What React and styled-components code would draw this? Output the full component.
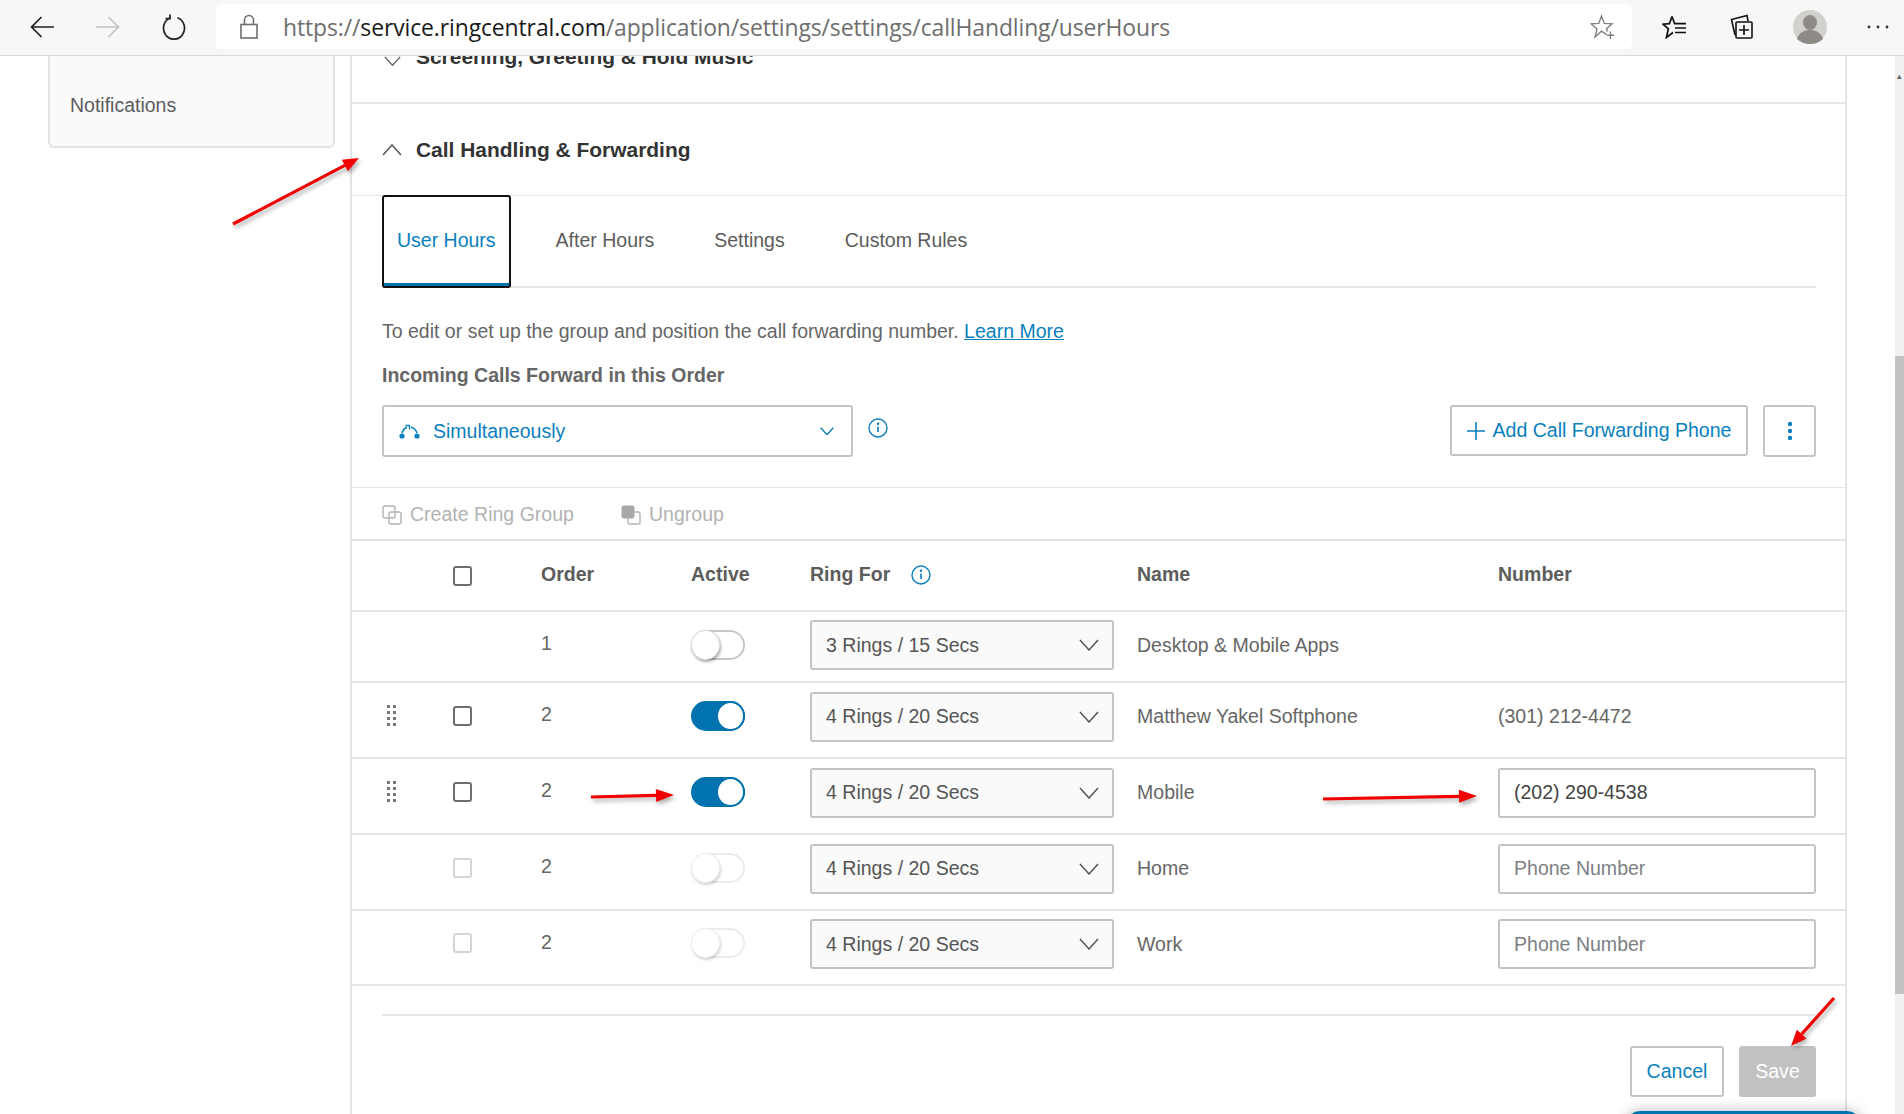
import React from "react";
import styled, { createGlobalStyle } from "styled-components";

const GlobalStyle = createGlobalStyle`
  html, body { margin: 0; padding: 0; background: #fff; }
  body { font-family: "Liberation Sans", Arial, sans-serif; color: #666; overflow: hidden; }
  * { box-sizing: border-box; }
`;

const BLUE = "#0a7fbd";
const LINE = "#e4e4e4";
const BORDER = "#c4c4c4";

const Page = styled.div`
  position: relative;
  width: 1904px;
  height: 1114px;
  overflow: hidden;
  display: flex;
  flex-direction: column;
`;

const BrowserBar = styled.header`
  position: relative;
  z-index: 2;
  height: 56px;
  flex: none;
  display: flex;
  align-items: flex-start;
  padding: 4px 0 0 30px;
  background: #f7f7f7;
  border-bottom: 1px solid #d8d8d8;
  overflow: hidden;
`;

const NavGroup = styled.div`
  display: flex;
  flex: none;
  gap: 42px;
  height: 45px;
  align-items: center;
`;

const UrlBox = styled.div`
  width: 1416px;
  height: 45px;
  flex: none;
  margin-left: 30px;
  display: flex;
  align-items: center;
  padding: 0 17px 0 24px;
  background: #fff;
  border-radius: 6px;
`;

const UrlText = styled.div`
  margin: 2px 0 0 25px;
  flex: 1;
  font-family: "Open Sans", sans-serif;
  font-size: 22.92px;
  letter-spacing: -0.1px;
  color: #6e6e6e;
  white-space: nowrap;
`;

const UrlHost = styled.span`
  color: #1a1a1a;
`;

const ToolGroup = styled.div`
  display: flex;
  flex: none;
  margin-left: 8px;
  height: 45px;
`;

const ToolSlot = styled.div`
  width: 68px;
  flex: none;
  display: flex;
  align-items: center;
  justify-content: center;
`;

const Content = styled.div`
  flex: 1;
  display: flex;
  min-height: 0;
`;

const Sidebar = styled.aside`
  width: 350px;
  flex: none;
  padding-left: 48px;
`;

const SideCard = styled.div`
  width: 287px;
  height: 92px;
  padding-top: 37px;
  padding-left: 20px;
  background: #fafafa;
  border: 2px solid ${LINE};
  border-top: 0;
  border-radius: 0 0 6px 6px;
  font-size: 19.5px;
  line-height: 24px;
  color: #5c5c5c;
`;

const Panel = styled.main`
  width: 1497px;
  flex: none;
  border-left: 2px solid ${LINE};
  border-right: 2px solid ${LINE};
`;

const SectionHead = styled.div`
  display: flex;
  align-items: ${(p) => (p.$clipped ? "flex-start" : "center")};
  height: ${(p) => p.$height}px;
  padding-left: 30px;
  overflow: hidden;
  border-bottom: ${(p) => (p.$thick ? 2 : 1)}px solid ${LINE};
`;

const ChevronSlot = styled.span`
  display: flex;
  justify-content: center;
  width: 20px;
  flex: none;
`;

const SectionTitle = styled.h3`
  margin: ${(p) => (p.$clipped ? "-11px" : "0")} 0 0 14px;
  font-size: 20.95px;
  line-height: 24px;
  font-weight: bold;
  color: #333;
`;

const Body = styled.div`
  padding: 0 29px 0 30px;
`;

const Tabs = styled.nav`
  display: flex;
  gap: 30px;
  height: 93px;
  margin-top: -1px;
  border-bottom: 2px solid ${LINE};
`;

const Tab = styled.div`
  position: relative;
  height: 93px;
  padding: 0 15px 3px;
  display: flex;
  align-items: center;
  font-size: 19.5px;
  color: ${(p) => (p.$active ? BLUE : "#5c5c5c")};
  ${(p) => p.$active && `
    margin-bottom: -2px;
    border: 2px solid #111;
    border-radius: 3px;
    padding: 0 13px 3px;
    box-shadow: inset 0 -3px 0 #0073ae;
    background: #fff;
  `}
`;

const Intro = styled.p`
  margin: 31px 0 0;
  font-size: 19.5px;
  line-height: 24px;
  color: #666;
`;

const LearnMore = styled.a`
  color: ${BLUE};
  text-decoration: underline;
`;

const FieldLabel = styled.div`
  margin-top: 20px;
  font-size: 19.5px;
  line-height: 24px;
  font-weight: bold;
  color: #666;
`;

const OrderRow = styled.div`
  display: flex;
  align-items: flex-start;
  margin-top: 18px;
  height: 82px;
`;

const OrderSelect = styled.div`
  width: 471px;
  height: 52px;
  display: flex;
  align-items: center;
  padding: 0 17px 0 15px;
  border: 2px solid ${BORDER};
  border-radius: 3px;
  font-size: 19.5px;
  color: ${BLUE};
`;

const OrderValue = styled.span`
  flex: 1;
  margin-left: 13px;
`;

const InfoSlot = styled.span`
  display: inline-flex;
  margin: ${(p) => p.$margin};
`;

const Spacer = styled.div`
  flex: 1;
`;

const OutlineButton = styled.button`
  height: ${(p) => p.$height || 51}px;
  width: ${(p) => p.$width}px;
  margin-left: ${(p) => p.$gap || 0}px;
  display: flex;
  align-items: center;
  justify-content: center;
  gap: 8px;
  padding: 0;
  background: #fff;
  border: 2px solid ${BORDER};
  border-radius: 3px;
  font-family: inherit;
  font-size: 19.55px;
  color: ${BLUE};
`;

const Toolbar = styled.div`
  display: flex;
  align-items: center;
  height: 52px;
  padding: 2px 0 0 30px;
  border-top: 1px solid ${LINE};
  font-size: 19.55px;
  color: #b2b2b2;
`;

const ToolbarItem = styled.span`
  display: flex;
  align-items: center;
  gap: 8px;
  margin-right: 47px;
`;

const Row = styled.div`
  display: grid;
  grid-template-columns: 71px 88px 150px 119px 327px 361px 318px;
  align-items: center;
  height: ${(p) => p.$height}px;
  padding: 0 0 ${(p) => p.$lift}px 30px;
  border-top: 2px solid ${LINE};
  font-size: 19.55px;
  color: #666;
`;

const HeadCell = styled.div`
  display: flex;
  align-items: center;
  margin-top: -2px;
  font-weight: bold;
  color: #5c5c5c;
`;

const OrderCell = styled.div`
  margin-top: -4px;
`;

const Check = styled.span`
  display: block;
  width: 19px;
  height: 20px;
  margin-top: ${(p) => (p.$nudge ? -2 : 0)}px;
  border: 2px solid ${(p) => (p.$muted ? "#d4d4d4" : "#6e6e6e")};
  border-radius: 3px;
`;

const Grip = styled.div`
  display: grid;
  grid-template-columns: 3px 3px;
  gap: 3px 3px;
  width: 9px;
  margin: -2px 0 0 5px;
`;

const GripDot = styled.i`
  display: block;
  width: 3px;
  height: 3px;
  background: #777;
`;

const Toggle = styled.span`
  position: relative;
  display: block;
  width: 54px;
  height: 30px;
  margin-top: ${(p) => (p.$nudge ? -2 : 0)}px;
  border-radius: 15px;
  border: 2px solid ${(p) => (p.$on ? "#0073ae" : p.$muted ? "#ececec" : "#c8c8c8")};
  background: ${(p) => (p.$on ? "#0073ae" : "#fff")};
`;

const Knob = styled.span`
  position: absolute;
  top: -2px;
  ${(p) => (p.$on ? "right: -2px;" : "left: -2px;")}
  width: 29px;
  height: 30px;
  border-radius: 50%;
  background: #fff;
  ${(p) => (p.$on
    ? "border: 2px solid #0073ae;"
    : `box-shadow: 1px 2px 3px rgba(0,0,0,${p.$muted ? 0.18 : 0.35}); border: 1px solid ${p.$muted ? "#eee" : "#ddd"};`)}
`;

const RingSelect = styled.div`
  width: 304px;
  height: 50px;
  display: flex;
  align-items: center;
  justify-content: space-between;
  padding: 0 13px 0 14px;
  background: #fafafa;
  border: 2px solid ${BORDER};
  border-radius: 3px;
  color: #555;
`;

const PhoneInput = styled.input`
  width: 318px;
  height: 50px;
  padding: 0 14px;
  border: 2px solid ${BORDER};
  border-radius: 3px;
  font-family: inherit;
  font-size: 19.55px;
  color: #444;
  outline: none;
  &::placeholder { color: #7c8084; opacity: 1; }
`;

const TableEnd = styled.div`
  border-top: 2px solid ${LINE};
  padding: 28px 29px 0 30px;
`;

const Footer = styled.div`
  display: flex;
  justify-content: flex-end;
  gap: 15px;
  padding-top: 30px;
  border-top: 2px solid ${LINE};
`;

const SaveButton = styled.button`
  width: 77px;
  height: 51px;
  padding: 0;
  background: #c2c2c2;
  border: 0;
  border-radius: 3px;
  font-family: inherit;
  font-size: 19.55px;
  color: #fff;
`;

const ScrollTrack = styled.div`
  width: 9px;
  margin-left: auto;
  flex: none;
  display: flex;
  flex-direction: column;
  background: #f1f1f1;
`;

const ScrollArrow = styled.div`
  height: 16px;
  margin-top: 12px;
  font-size: 9px;
  line-height: 16px;
  text-align: center;
  color: #666;
`;

const ScrollThumb = styled.div`
  height: 638px;
  margin-top: 272px;
  background: #c2c2c2;
`;

const HelpPill = styled.div`
  position: absolute;
  left: 1626px;
  top: 1111px;
  width: 235px;
  height: 30px;
  border-radius: 14px 14px 0 0;
  background: #0073ae;
  box-shadow: 0 0 14px rgba(0, 0, 0, 0.28);
`;

const Annotations = styled.svg`
  position: absolute;
  inset: 0;
  z-index: 3;
  pointer-events: none;
  filter: drop-shadow(2px 3px 2px rgba(0, 0, 0, 0.3));
`;

const Chevron = ({ up, size = 22, color = "#555", width = 1.5 }) => (
  <svg width={size} height={size * 0.6} viewBox="0 0 20 12" fill="none" stroke={color} strokeWidth={width}>
    <path d={up ? "M1 11 10 1l9 10" : "M1 1l9 10 9-10"} />
  </svg>
);

const InfoIcon = () => (
  <svg width="20" height="20" viewBox="0 0 20 20" fill="none" stroke={BLUE} strokeWidth="1.4">
    <circle cx="10" cy="10" r="9" />
    <path d="M10 8.6v5.4" strokeWidth="1.6" />
    <circle cx="10" cy="5.8" r="0.6" fill={BLUE} />
  </svg>
);

const BackIcon = () => (
  <svg width="24" height="22" viewBox="0 0 24 22" fill="none" stroke="#222" strokeWidth="1.7">
    <path d="M24 11H2M11.5 1 1.5 11l10 10" />
  </svg>
);

const ForwardIcon = () => (
  <svg width="24" height="22" viewBox="0 0 24 22" fill="none" stroke="#c4c4c4" strokeWidth="1.7">
    <path d="M0 11h22M12.5 1l10 10-10 10" />
  </svg>
);

const RefreshIcon = () => (
  <svg width="24" height="26" viewBox="0 0 24 26" fill="none" stroke="#222" strokeWidth="1.7">
    <path d="M15.5 3.8a10.5 11 0 1 1-7 0" />
    <path d="M8 0.5v4.2H3.5" />
  </svg>
);

const LockIcon = () => (
  <svg width="18" height="25" viewBox="0 0 18 25" fill="none" stroke="#6e6e6e" strokeWidth="1.6">
    <rect x="1" y="10.5" width="16" height="13.5" />
    <path d="M4.5 10.5V6a4.5 4.5 0 0 1 9 0v4.5" />
  </svg>
);

const StarAddIcon = () => (
  <svg width="25" height="26" viewBox="0 0 25 26" fill="none" stroke="#808080" strokeWidth="1.4">
    <path d="M16.5 20.6 11.5 17.2 5 23l2-8-6-5.2 7.8-.4L11.5 2l2.8 7.4 7.8.4-5.6 5 .9 2.6" />
    <path d="M20.5 17.5v7.5M17 21.2h7.2" />
  </svg>
);

const FavoritesIcon = () => (
  <svg width="24" height="24" viewBox="0 0 24 24" fill="none" stroke="#111" strokeWidth="1.7">
    <path d="M10 1.5 7.4 8.6 1 9.2l5.4 4.6L4.4 22.5l6.6-5" />
    <path d="M10 1.5l2.6 7.1H24M13 13h11M13 17.5h11" />
  </svg>
);

const CollectionsIcon = () => (
  <svg width="24" height="26" viewBox="0 0 24 26" fill="none" stroke="#111" strokeWidth="1.6">
    <path d="M5 21 1.5 5.5 17 1.5 18 7" />
    <rect x="6" y="8" width="16" height="16" rx="1" fill="#f7f7f7" />
    <path d="M14 11v10M9 16h10" />
  </svg>
);

const AvatarIcon = () => (
  <svg width="34" height="34" viewBox="0 0 34 34">
    <ellipse cx="17" cy="17" rx="17" ry="17" fill="#d2d1ce" />
    <ellipse cx="17" cy="12.5" rx="7" ry="7.5" fill="#8e8a86" />
    <path d="M4 29c2-7 8-9 13-9s11 2 13 9c-3 3-8 5-13 5S7 32 4 29z" fill="#8e8a86" />
  </svg>
);

const MoreIcon = () => (
  <svg width="22" height="4" viewBox="0 0 22 4" fill="#333">
    <circle cx="2" cy="2" r="1.4" /><circle cx="11" cy="2" r="1.4" /><circle cx="20" cy="2" r="1.4" />
  </svg>
);

const RouteIcon = () => (
  <svg width="21" height="15" viewBox="0 0 21 15" fill="none" stroke={BLUE} strokeWidth="1.5">
    <path d="M3 9c1-3 3-5 5-6M18 9c-1-3-3-5-6-6" />
    <path d="M6.5 1.5 10.5 1.5 10.5 5.5" strokeWidth="1.3" />
    <circle cx="3" cy="12" r="2.6" fill={BLUE} stroke="none" />
    <circle cx="18" cy="12" r="2.6" fill={BLUE} stroke="none" />
  </svg>
);

const PlusIcon = () => (
  <svg width="18" height="18" viewBox="0 0 18 18" stroke={BLUE} strokeWidth="1.6">
    <path d="M9 0v18M0 9h18" />
  </svg>
);

const KebabIcon = () => (
  <svg width="6" height="20" viewBox="0 0 6 20" fill={BLUE}>
    <circle cx="3" cy="3" r="2.2" /><circle cx="3" cy="10" r="2.2" /><circle cx="3" cy="17" r="2.2" />
  </svg>
);

const GroupIcon = () => (
  <svg width="20" height="20" viewBox="0 0 20 20" fill="none" stroke="#b2b2b2" strokeWidth="1.4">
    <rect x="1" y="1" width="12" height="12" rx="2" />
    <rect x="7" y="7" width="12" height="12" rx="2" />
  </svg>
);

const UngroupIcon = () => (
  <svg width="20" height="20" viewBox="0 0 20 20" fill="none" stroke="#b2b2b2" strokeWidth="1.4">
    <rect x="7" y="7" width="12" height="12" rx="2" />
    <rect x="0.5" y="0.5" width="13" height="13" rx="2.5" fill="#a8a8a8" stroke="none" />
  </svg>
);

const Arrow = ({ from, to, head = 16, width = 3.2 }) => {
  const [x1, y1] = from;
  const [x2, y2] = to;
  const a = Math.atan2(y2 - y1, x2 - x1);
  const bx = x2 - head * Math.cos(a);
  const by = y2 - head * Math.sin(a);
  const nx = -Math.sin(a) * 6.5;
  const ny = Math.cos(a) * 6.5;
  return (
    <g>
      <path d={`M${x1} ${y1}L${bx} ${by}`} stroke="#f00000" strokeWidth={width} />
      <path d={`M${x2} ${y2}L${bx + nx} ${by + ny}L${bx - nx} ${by - ny}Z`} fill="#f00000" />
    </g>
  );
};

const rows = [
  { order: 1, ring: "3 Rings / 15 Secs", name: "Desktop & Mobile Apps", height: 71, lift: 3, fixed: true },
  { order: 2, ring: "4 Rings / 20 Secs", name: "Matthew Yakel Softphone", number: "(301) 212-4472", on: true, grip: true, height: 76, lift: 7 },
  { order: 2, ring: "4 Rings / 20 Secs", name: "Mobile", value: "(202) 290-4538", on: true, grip: true, height: 76, lift: 7 },
  { order: 2, ring: "4 Rings / 20 Secs", name: "Home", muted: true, height: 76, lift: 7 },
  { order: 2, ring: "4 Rings / 20 Secs", name: "Work", muted: true, height: 75, lift: 7 },
];

const App = () => (
  <Page>
    <GlobalStyle />
    <BrowserBar>
      <NavGroup>
        <BackIcon />
        <ForwardIcon />
        <RefreshIcon />
      </NavGroup>
      <UrlBox>
        <LockIcon />
        <UrlText>
          https://<UrlHost>service.ringcentral.com</UrlHost>/application/settings/settings/callHandling/userHours
        </UrlText>
        <StarAddIcon />
      </UrlBox>
      <ToolGroup>
        <ToolSlot><FavoritesIcon /></ToolSlot>
        <ToolSlot><CollectionsIcon /></ToolSlot>
        <ToolSlot><AvatarIcon /></ToolSlot>
        <ToolSlot><MoreIcon /></ToolSlot>
      </ToolGroup>
    </BrowserBar>

    <Content>
      <Sidebar>
        <SideCard>Notifications</SideCard>
      </Sidebar>

      <Panel>
        <SectionHead $clipped $thick $height={48}>
          <ChevronSlot><Chevron size={17} /></ChevronSlot>
          <SectionTitle $clipped>Screening, Greeting &amp; Hold Music</SectionTitle>
        </SectionHead>
        <SectionHead $height={92}>
          <ChevronSlot><Chevron up size={20} /></ChevronSlot>
          <SectionTitle>Call Handling &amp; Forwarding</SectionTitle>
        </SectionHead>

        <Body>
          <Tabs>
            <Tab $active>User Hours</Tab>
            <Tab>After Hours</Tab>
            <Tab>Settings</Tab>
            <Tab>Custom Rules</Tab>
          </Tabs>
          <Intro>
            To edit or set up the group and position the call forwarding number. <LearnMore>Learn More</LearnMore>
          </Intro>
          <FieldLabel>Incoming Calls Forward in this Order</FieldLabel>
          <OrderRow>
            <OrderSelect>
              <RouteIcon />
              <OrderValue>Simultaneously</OrderValue>
              <Chevron size={14} color={BLUE} width={2} />
            </OrderSelect>
            <InfoSlot $margin="13px 0 0 15px"><InfoIcon /></InfoSlot>
            <Spacer />
            <OutlineButton $width={298}><PlusIcon />Add Call Forwarding Phone</OutlineButton>
            <OutlineButton $width={53} $height={52} $gap={15}><KebabIcon /></OutlineButton>
          </OrderRow>
        </Body>

        <Toolbar>
          <ToolbarItem><GroupIcon />Create Ring Group</ToolbarItem>
          <ToolbarItem><UngroupIcon />Ungroup</ToolbarItem>
        </Toolbar>

        <Row $height={71} $lift={0}>
          <span />
          <Check />
          <HeadCell>Order</HeadCell>
          <HeadCell>Active</HeadCell>
          <HeadCell>Ring For<InfoSlot $margin="0 0 0 21px"><InfoIcon /></InfoSlot></HeadCell>
          <HeadCell>Name</HeadCell>
          <HeadCell>Number</HeadCell>
        </Row>

        {rows.map((row, i) => (
          <Row key={i} $height={row.height} $lift={row.lift}>
            {row.grip ? (
              <Grip>{Array.from({ length: 8 }, (_, d) => <GripDot key={d} />)}</Grip>
            ) : <span />}
            {row.fixed ? <span /> : <Check $muted={row.muted} $nudge />}
            <OrderCell>{row.order}</OrderCell>
            <Toggle $on={row.on} $muted={row.muted} $nudge={!row.fixed}><Knob $on={row.on} $muted={row.muted} /></Toggle>
            <RingSelect>{row.ring}<Chevron size={20} /></RingSelect>
            <div>{row.name}</div>
            {row.number && <div>{row.number}</div>}
            {row.value && <PhoneInput readOnly defaultValue={row.value} />}
            {row.muted && <PhoneInput readOnly placeholder="Phone Number" />}
          </Row>
        ))}

        <TableEnd>
          <Footer>
            <OutlineButton $width={94}>Cancel</OutlineButton>
            <SaveButton>Save</SaveButton>
          </Footer>
        </TableEnd>
      </Panel>

      <ScrollTrack>
        <ScrollArrow>▴</ScrollArrow>
        <ScrollThumb />
      </ScrollTrack>
    </Content>

    <HelpPill />

    <Annotations width="1904" height="1114" viewBox="0 0 1904 1114">
      <Arrow from={[233, 224]} to={[359, 158]} />
      <Arrow from={[591, 797]} to={[674, 795]} head={18} />
      <Arrow from={[1323, 799]} to={[1477, 796]} head={18} />
      <Arrow from={[1834, 998]} to={[1791, 1046]} />
    </Annotations>
  </Page>
);

export default App;
